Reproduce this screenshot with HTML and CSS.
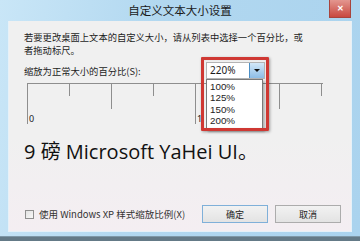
FILE: index.html
```html
<!DOCTYPE html>
<html lang="zh-CN">
<head>
    <meta charset="UTF-8">
    <meta name="viewport" content="width=device-width, initial-scale=1.0">
    <title>自定义文本大小设置</title>
    <link rel="stylesheet" href="styles.css">
</head>
<body>
    <div class="window">
        <div class="titlebar">
            <span></span>
            <span class="title">自定义文本大小设置</span>
            <button class="close-btn">&#x2715;</button>
        </div>

        <div class="client">
            <p class="intro">若要更改桌面上文本的自定义大小，请从列表中选择一个百分比，或者拖动标尺。</p>

            <div class="scale-row">
                <span class="scale-label">缩放为正常大小的百分比(S):</span>
                <div class="combo">
                    <div class="combo-value">220%</div>
                    <div class="combo-btn"><span class="arrow"></span></div>

                    <ul class="combo-list">
                        <li>100%</li>
                        <li>125%</li>
                        <li>150%</li>
                        <li>200%</li>
                    </ul>
                    <div class="highlight"></div>
                </div>
            </div>

            <div class="ruler">
                <div class="tick major"><span>0</span></div>
                <div class="tick minor"></div>
                <div class="tick half"></div>
                <div class="tick minor"></div>
                <div class="tick major"><span>1</span></div>
                <div class="tick minor"></div>
                <div class="tick half"></div>
                <div class="tick minor"></div>
            </div>

            <div class="sample">9 磅 Microsoft YaHei UI。</div>

            <div class="footer">
                <label class="check">
                    <span class="box"></span>
                    使用 Windows XP 样式缩放比例(X)
                </label>
                <div class="buttons">
                    <button class="btn default">确定</button>
                    <button class="btn">取消</button>
                </div>
            </div>
        </div>
    </div>
</body>
</html>
```

FILE: styles.css
```css
        body {
            margin: 0;
            width: 360px;
            height: 241px;
            overflow: hidden;
            background: #647a87;
            font-family: "Noto Sans", "Noto Sans CJK SC", sans-serif;
            color: #1c1c1c;
        }
        .window {
            width: 360px;
            height: 237px;
            display: flex;
            flex-direction: column;
            background: linear-gradient(100deg, #c9e6f7 0%, #b2d8f0 40%, #aad3ee 100%);
            border-bottom: 1px solid #7e98a8;
            box-sizing: border-box;
            padding-bottom: 4px;
        }
        .titlebar {
            height: 21px;
            display: grid;
            grid-template-columns: 1fr auto 1fr;
            align-items: start;
        }
        .title {
            font-family: "Noto Sans CJK SC", sans-serif;
            font-size: 11.5px;
            line-height: 21px;
            color: #1a1a1a;
        }
        .close-btn {
            justify-self: end;
            width: 22px;
            height: 18px;
            margin-right: 9px;
            padding: 0;
            border: 1px solid #a8443d;
            border-top: none;
            background: linear-gradient(#e3968f, #c9483f);
            color: #fff;
            font-size: 8px;
            font-weight: bold;
            line-height: 16px;
            text-align: center;
        }
        .client {
            flex: 1;
            margin: 0 8px;
            display: flex;
            flex-direction: column;
            padding: 10px 10px 8px 15px;
            background: linear-gradient(#f0f0f0 0%, #f0f0f0 55%, #f4eef2 100%);
            border: 1px solid #e6f1f8;
            border-top: none;
            box-sizing: border-box;
        }
        .intro {
            margin: 0;
            max-width: 284px;
            font-family: "Noto Sans CJK SC", sans-serif;
            font-size: 9.3px;
            line-height: 13px;
        }
        .scale-row {
            display: flex;
            align-items: center;
            margin-top: 5px;
            height: 17px;
        }
        .scale-label {
            width: 182px;
            font-family: "Noto Sans CJK SC", sans-serif;
            font-size: 9.3px;
        }
        .combo {
            position: relative;
            width: 59px;
            height: 17px;
            display: flex;
            background: #fff;
            border: 1px solid #b4b4b4;
            box-sizing: border-box;
        }
        .combo-value {
            flex: 1;
            padding-left: 3px;
            font-size: 10px;
            line-height: 15px;
        }
        .combo-btn {
            width: 14px;
            display: flex;
            align-items: center;
            justify-content: center;
            background: linear-gradient(#d3e8f8, #8dbde6);
            border-left: 1px solid #4c8ec4;
        }
        .arrow {
            width: 0;
            height: 0;
            border-left: 3px solid transparent;
            border-right: 3px solid transparent;
            border-top: 3px solid #111;
        }
        .combo-list {
            position: absolute;
            left: -1px;
            top: 16px;
            width: 57px;
            margin: 0;
            padding: 1px 0 3px 3px;
            list-style: none;
            background: #fff;
            border: 1px solid #7a7a7a;
            box-sizing: border-box;
            box-shadow: 2px 2px 2px rgba(0,0,0,0.25);
            font-family: "Liberation Sans", sans-serif;
            font-size: 9.8px;
            line-height: 11.3px;
            z-index: 1;
        }
        .highlight {
            position: absolute;
            left: -6px;
            top: -6px;
            width: 68px;
            height: 74px;
            border: 3px solid #cf3833;
            border-radius: 1px;
            box-sizing: border-box;
            box-shadow: 1px 1px 3px rgba(0,0,0,0.35), inset 0 0 1px rgba(0,0,0,0.2);
            z-index: 2;
        }
        .ruler {
            display: flex;
            width: 296px;
            margin: 4px 0 0 3px;
            border-top: 1px solid #8e8e8e;
            align-items: flex-start;
        }
        .tick {
            width: 42px;
            flex-shrink: 0;
            border-left: 1px solid #8e8e8e;
            box-sizing: border-box;
            display: flex;
            align-items: flex-end;
        }
        .tick.minor { height: 12px; }
        .tick.half { height: 25px; }
        .tick.major { height: 40px; }
        .tick span {
            padding-left: 1px;
            font-size: 9px;
            line-height: 10px;
        }
        .sample {
            margin-top: 15px;
            font-family: "Open Sans", "Noto Sans CJK SC", sans-serif;
            font-size: 20px;
            line-height: 26px;
            color: #111;
        }
        .footer {
            margin-top: auto;
            display: flex;
            align-items: center;
        }
        .check {
            display: flex;
            align-items: center;
            gap: 5px;
            margin-left: 1px;
            font-family: "Noto Sans CJK SC", sans-serif;
            font-size: 9.5px;
            color: #333;
        }
        .box {
            width: 9px;
            height: 9px;
            border: 1px solid #8f8f8f;
            background: linear-gradient(135deg, #e2e2e2, #f8f8f8);
            box-sizing: border-box;
        }
        .buttons {
            margin-left: auto;
            display: flex;
            gap: 7px;
        }
        .btn {
            width: 66px;
            height: 18px;
            padding: 0;
            border: 1px solid #acacac;
            background: linear-gradient(#f2f2f2, #e3e3e3);
            font-family: "Noto Sans CJK SC", sans-serif;
            font-size: 9px;
            color: #222;
        }
        .btn.default {
            border-color: #7fb0d9;
        }
```
